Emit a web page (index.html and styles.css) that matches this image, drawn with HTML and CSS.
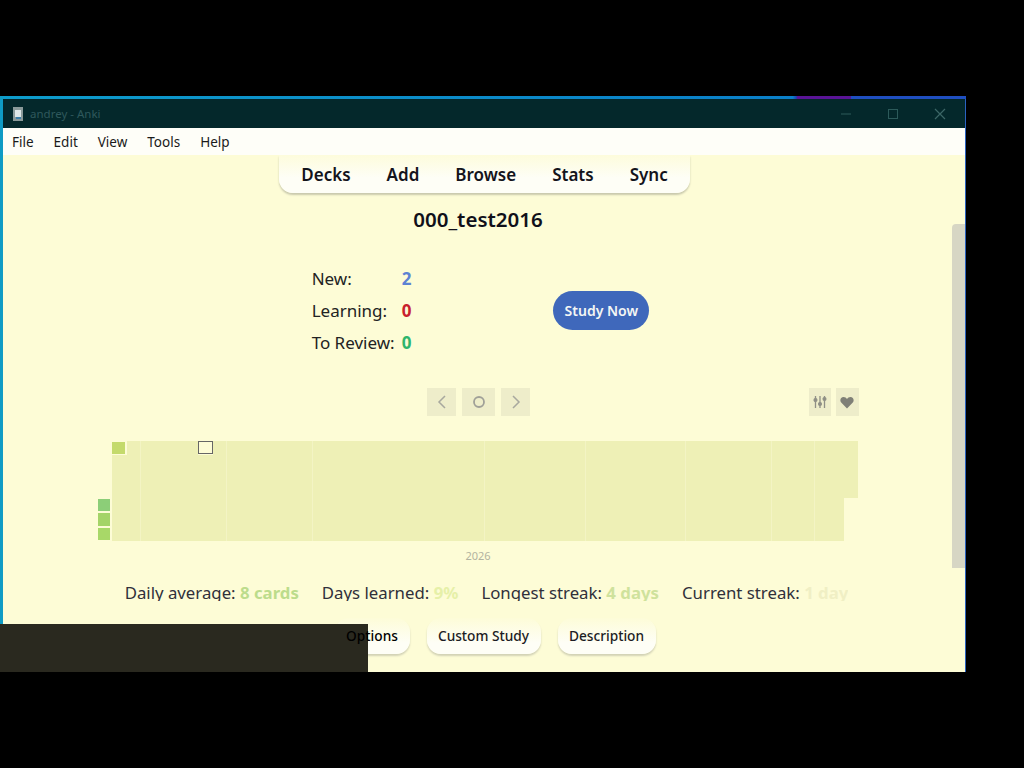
FILE: index.html
```html
<!DOCTYPE html>
<html lang="en">
<head>
    <meta charset="UTF-8">
    <title>andrey - Anki</title>
    <link rel="stylesheet" href="styles.css">
</head>
<body>
    <div class="window">
        <div class="frame-top"></div>
        <div class="titlebar">
            <svg class="app-icon" width="12" height="14" viewBox="0 0 12 14">
                <rect x="1" y="0" width="10" height="14" fill="#8a9a9a"/>
                <rect x="3" y="3" width="6" height="7" fill="#dfe8e8"/>
                <rect x="4" y="10" width="5" height="2" fill="#3d7fa8"/>
            </svg>
            <span class="title-text">andrey - Anki</span>
            <div class="controls">
                <svg width="12" height="12" viewBox="0 0 12 12"><path d="M1 6h10" stroke="#2c5a5a" fill="none"/></svg>
                <svg width="12" height="12" viewBox="0 0 12 12"><rect x="1.500" y="1.500" width="9" height="9" stroke="#2c5a5a" fill="none"/></svg>
                <svg width="12" height="12" viewBox="0 0 12 12"><path d="M1 1l10 10M11 1L1 11" stroke="#3c6666" stroke-width="1.200" fill="none"/></svg>
            </div>
        </div>
        <div class="menubar">
            <span>File</span>
            <span>Edit</span>
            <span>View</span>
            <span>Tools</span>
            <span>Help</span>
        </div>
        <div class="main">
            <div class="page">
                <div class="toolbar">
                    <span>Decks</span>
                    <span>Add</span>
                    <span>Browse</span>
                    <span>Stats</span>
                    <span>Sync</span>
                </div>
                <h1 class="deck-title">000_test2016</h1>
                <div class="overview">
                    <div class="counts">
                        <span>New:</span><b class="new">2</b>
                        <span>Learning:</span><b class="learn">0</b>
                        <span>To Review:</span><b class="review">0</b>
                    </div>
                    <div class="study-btn">Study Now</div>
                </div>
                <div class="heat-nav">
                    <div class="heat-nav-center">
                        <div class="nav-btn">
                            <svg width="10" height="14" viewBox="0 0 10 14"><path d="M8 1L2 7l6 6" stroke="#a8a89e" stroke-width="1.500" fill="none"/></svg>
                        </div>
                        <div class="nav-btn wide">
                            <svg width="14" height="14" viewBox="0 0 14 14"><circle cx="7" cy="7" r="5" stroke="#a0a098" stroke-width="1.800" fill="none"/></svg>
                        </div>
                        <div class="nav-btn">
                            <svg width="10" height="14" viewBox="0 0 10 14"><path d="M2 1l6 6-6 6" stroke="#a8a89e" stroke-width="1.500" fill="none"/></svg>
                        </div>
                    </div>
                    <div class="heat-nav-right">
                        <div class="nav-btn small">
                            <svg width="14" height="14" viewBox="0 0 14 14" stroke="#8f8f86" stroke-width="1.300" fill="#8f8f86">
                                <path d="M2.500 1v12M7 1v12M11.500 1v12" fill="none"/>
                                <circle cx="2.500" cy="5" r="1.400"/>
                                <circle cx="7" cy="9" r="1.400"/>
                                <circle cx="11.500" cy="4" r="1.400"/>
                            </svg>
                        </div>
                        <div class="nav-btn small last">
                            <svg width="14" height="13" viewBox="0 0 14 13"><path d="M7 12.500L1.200 6.600C-.6 4.600.6 1 3.600 1 5 1 6.300 1.800 7 3c.7-1.200 2-2 3.400-2 3 0 4.200 3.600 2.400 5.600z" fill="#7f7f77"/></svg>
                        </div>
                    </div>
                </div>
                <div class="heatmap" id="heatmap"></div>
                <div class="year">2026</div>
                <div class="stats">
                    <span>Daily average: <b class="avg">8 cards</b></span>
                    <span>Days learned: <b class="days">9%</b></span>
                    <span>Longest streak: <b class="longest">4 days</b></span>
                    <span>Current streak: <b class="current">1 day</b></span>
                </div>
                <div class="bottom-btns">
                    <div class="pill options"><span class="pill-label">Options</span></div>
                    <div class="pill custom"><span class="pill-label">Custom Study</span></div>
                    <div class="pill desc"><span class="pill-label">Description</span></div>
                </div>
            </div>
            <div class="scrollbar"><div class="thumb"></div></div>
        </div>
    </div>
    <div class="dark-patch"></div>
    <script src="script.js"></script>
</body>
</html>
```

FILE: styles.css
```css
body {
    margin: 0;
    height: 768px;
    background-color: #000;
    font-family: "Noto Sans", "Open Sans", sans-serif;
    overflow: hidden;
    position: relative;
}
.window {
    position: absolute;
    left: 0;
    top: 96px;
    width: 966px;
    height: 576px;
    box-sizing: border-box;
    border-left: 3px solid #0f9bc4;
    border-right: 1px solid #2a62c0;
    display: flex;
    flex-direction: column;
    background-color: #fdfcd6;
}
/* Accent strip along the top of the frame */
.frame-top {
    height: 3px;
    flex: none;
    margin-right: -1px;
    background: linear-gradient(to right, #0d9ccb 0, #0a7fc8 82%, #1f3fb0 82.400%, #5a1496 82.500%, #5a1496 88%, #1f4fc0 88.100%, #1f4fc0 100%);
}
.titlebar {
    height: 29px;
    flex: none;
    background-color: #04282b;
    display: flex;
    align-items: center;
    padding-left: 9px;
}
.app-icon {
    margin-right: 6px;
}
.title-text {
    font-size: 11.500px;
    color: #2f585c;
}
.controls {
    margin-left: auto;
    display: flex;
    gap: 35px;
    margin-right: 19px;
}
.menubar {
    height: 27px;
    flex: none;
    background-color: #fefef8;
    display: flex;
    align-items: center;
    gap: 20px;
    padding-left: 9px;
    font-size: 13.500px;
    color: #1a1a1a;
}
.main {
    flex: 1;
    display: flex;
    min-height: 0;
}
.page {
    flex: 1;
    min-width: 0;
    display: flex;
    flex-direction: column;
    align-items: center;
    padding-left: 1px;
}
.toolbar {
    display: flex;
    gap: 36px;
    height: 38px;
    margin-left: 13px;
    align-items: center;
    padding: 0 22px;
    background: linear-gradient(#fdfcdc, #fefef6 60%);
    border-radius: 0 0 14px 14px;
    box-shadow: 0 2px 2px #c9c9ad;
    font-size: 17px;
    font-weight: 600;
    color: #14141c;
}
.deck-title {
    margin: 12px 0 0;
    font-size: 20.500px;
    line-height: 28px;
    font-weight: 600;
    color: #10101a;
}
.overview {
    margin-top: 29px;
    display: flex;
    align-items: center;
    gap: 142px;
    margin-left: 5px;
}
.counts {
    display: grid;
    grid-template-columns: auto auto;
    column-gap: 7px;
    grid-auto-rows: 32px;
    align-items: center;
    font-size: 17px;
    color: #222;
}
.new { color: #5d83d3; }
.learn { color: #c8202c; }
.review { color: #2fb56c; }
.study-btn {
    width: 96px;
    height: 39px;
    border-radius: 20px;
    background-color: #3f68bb;
    color: #f4f6f4;
    font-size: 14px;
    font-weight: 600;
    display: flex;
    align-items: center;
    justify-content: center;
    margin-top: 1px;
}
.heat-nav {
    width: 760px;
    height: 28px;
    margin-top: 30px;
    position: relative;
    display: flex;
    justify-content: center;
    margin-left: 1px;
}
.heat-nav-center {
    display: flex;
    gap: 6px;
}
.heat-nav-right {
    position: absolute;
    right: 0;
    top: 0;
    display: flex;
    gap: 5px;
}
.nav-btn {
    width: 29px;
    height: 28px;
    background-color: #eeedca;
    display: flex;
    align-items: center;
    justify-content: center;
}
.nav-btn.wide { width: 33px; }
.nav-btn.small { width: 22px; }
.nav-btn.last { width: 23px; }
.heatmap {
    margin-top: 25px;
    display: grid;
    grid-template-columns: repeat(53, 14.35px);
    grid-template-rows: repeat(7, 14.29px);
    grid-auto-flow: column;
}
.cell {
    background-color: #eef0b6;
    box-sizing: border-box;
}
.cell.seam {
    border-right: 1px solid #f3f4c4;
}
.cell.blank {
    background-color: transparent;
    border: 0;
}
.cell.level1, .cell.level2, .cell.level3, .cell.level4 {
    background-clip: content-box;
    padding: 1px 2px 1px 0;
}
.cell.level1 { background-color: #c4da6c; }
.cell.level2 { background-color: #a4d468; }
.cell.level3 { background-color: #8cce78; }
.cell.level4 { background-color: #a8d868; }
.cell.today {
    background-color: #fdfcd6;
    border: 1.500px solid #666;
    height: 13px;
}
.year {
    margin-top: 7px;
    font-size: 11px;
    line-height: 15px;
    color: #b3b3a0;
}
/* The capture cuts this row just under the baseline */
.stats {
    margin-top: 18px;
    margin-left: 17px;
    display: flex;
    gap: 23px;
    font-size: 16.800px;
    line-height: 24px;
    height: 20px;
    overflow: hidden;
    color: #30303a;
    white-space: nowrap;
}
.avg { color: #bcdc8c; }
.days { color: #e6f0a8; }
.longest { color: #cfe29c; }
.current { color: #f0efc4; }
.bottom-btns {
    margin-top: 17px;
    margin-left: 34px;
    display: flex;
    gap: 17px;
}
.pill {
    height: 36px;
    box-sizing: border-box;
    display: flex;
    align-items: center;
    justify-content: center;
    background: linear-gradient(#fdfcd8, #fefef6 70%);
    border-radius: 14px;
    box-shadow: 0 2px 2px #d2d2b6;
    font-size: 13.700px;
    font-weight: 500;
    color: #1c1c24;
}
/* Labels stay readable on top of the dark patch */
.pill-label {
    position: relative;
    z-index: 2;
}
.pill.options {
    width: 75px;
    color: #000;
}
.pill.custom { width: 114px; }
.pill.desc { width: 98px; }
.scrollbar {
    width: 13px;
    flex: none;
    position: relative;
}
.thumb {
    position: absolute;
    left: 0;
    top: 69px;
    width: 100%;
    height: 344px;
    background-color: #d7d6c4;
    border-radius: 4px 0 0 0;
}
.dark-patch {
    position: absolute;
    z-index: 1;
    left: 0;
    top: 624px;
    width: 368px;
    height: 48px;
    background-color: #2a291f;
}
```

FILE: script.js
```js
// Build the year heatmap: 53 columns of 7 days
var heatmap = document.getElementById('heatmap');
var levels = { '0-4': 'level3', '0-5': 'level2', '0-6': 'level4', '1-0': 'level1', '7-0': 'today' };
var seams = [2, 8, 14, 26, 33, 40, 46, 49];

for (var col = 0; col < 53; col++) {
    for (var row = 0; row < 7; row++) {
        var cell = document.createElement('div');
        cell.className = 'cell';
        if ((col === 0 && row < 4) || (col === 52 && row > 3)) {
            cell.classList.add('blank');
        }
        var level = levels[col + '-' + row];
        if (level) {
            cell.classList.add(level);
        } else if (seams.indexOf(col) !== -1) {
            cell.classList.add('seam');
        }
        heatmap.appendChild(cell);
    }
}
```
